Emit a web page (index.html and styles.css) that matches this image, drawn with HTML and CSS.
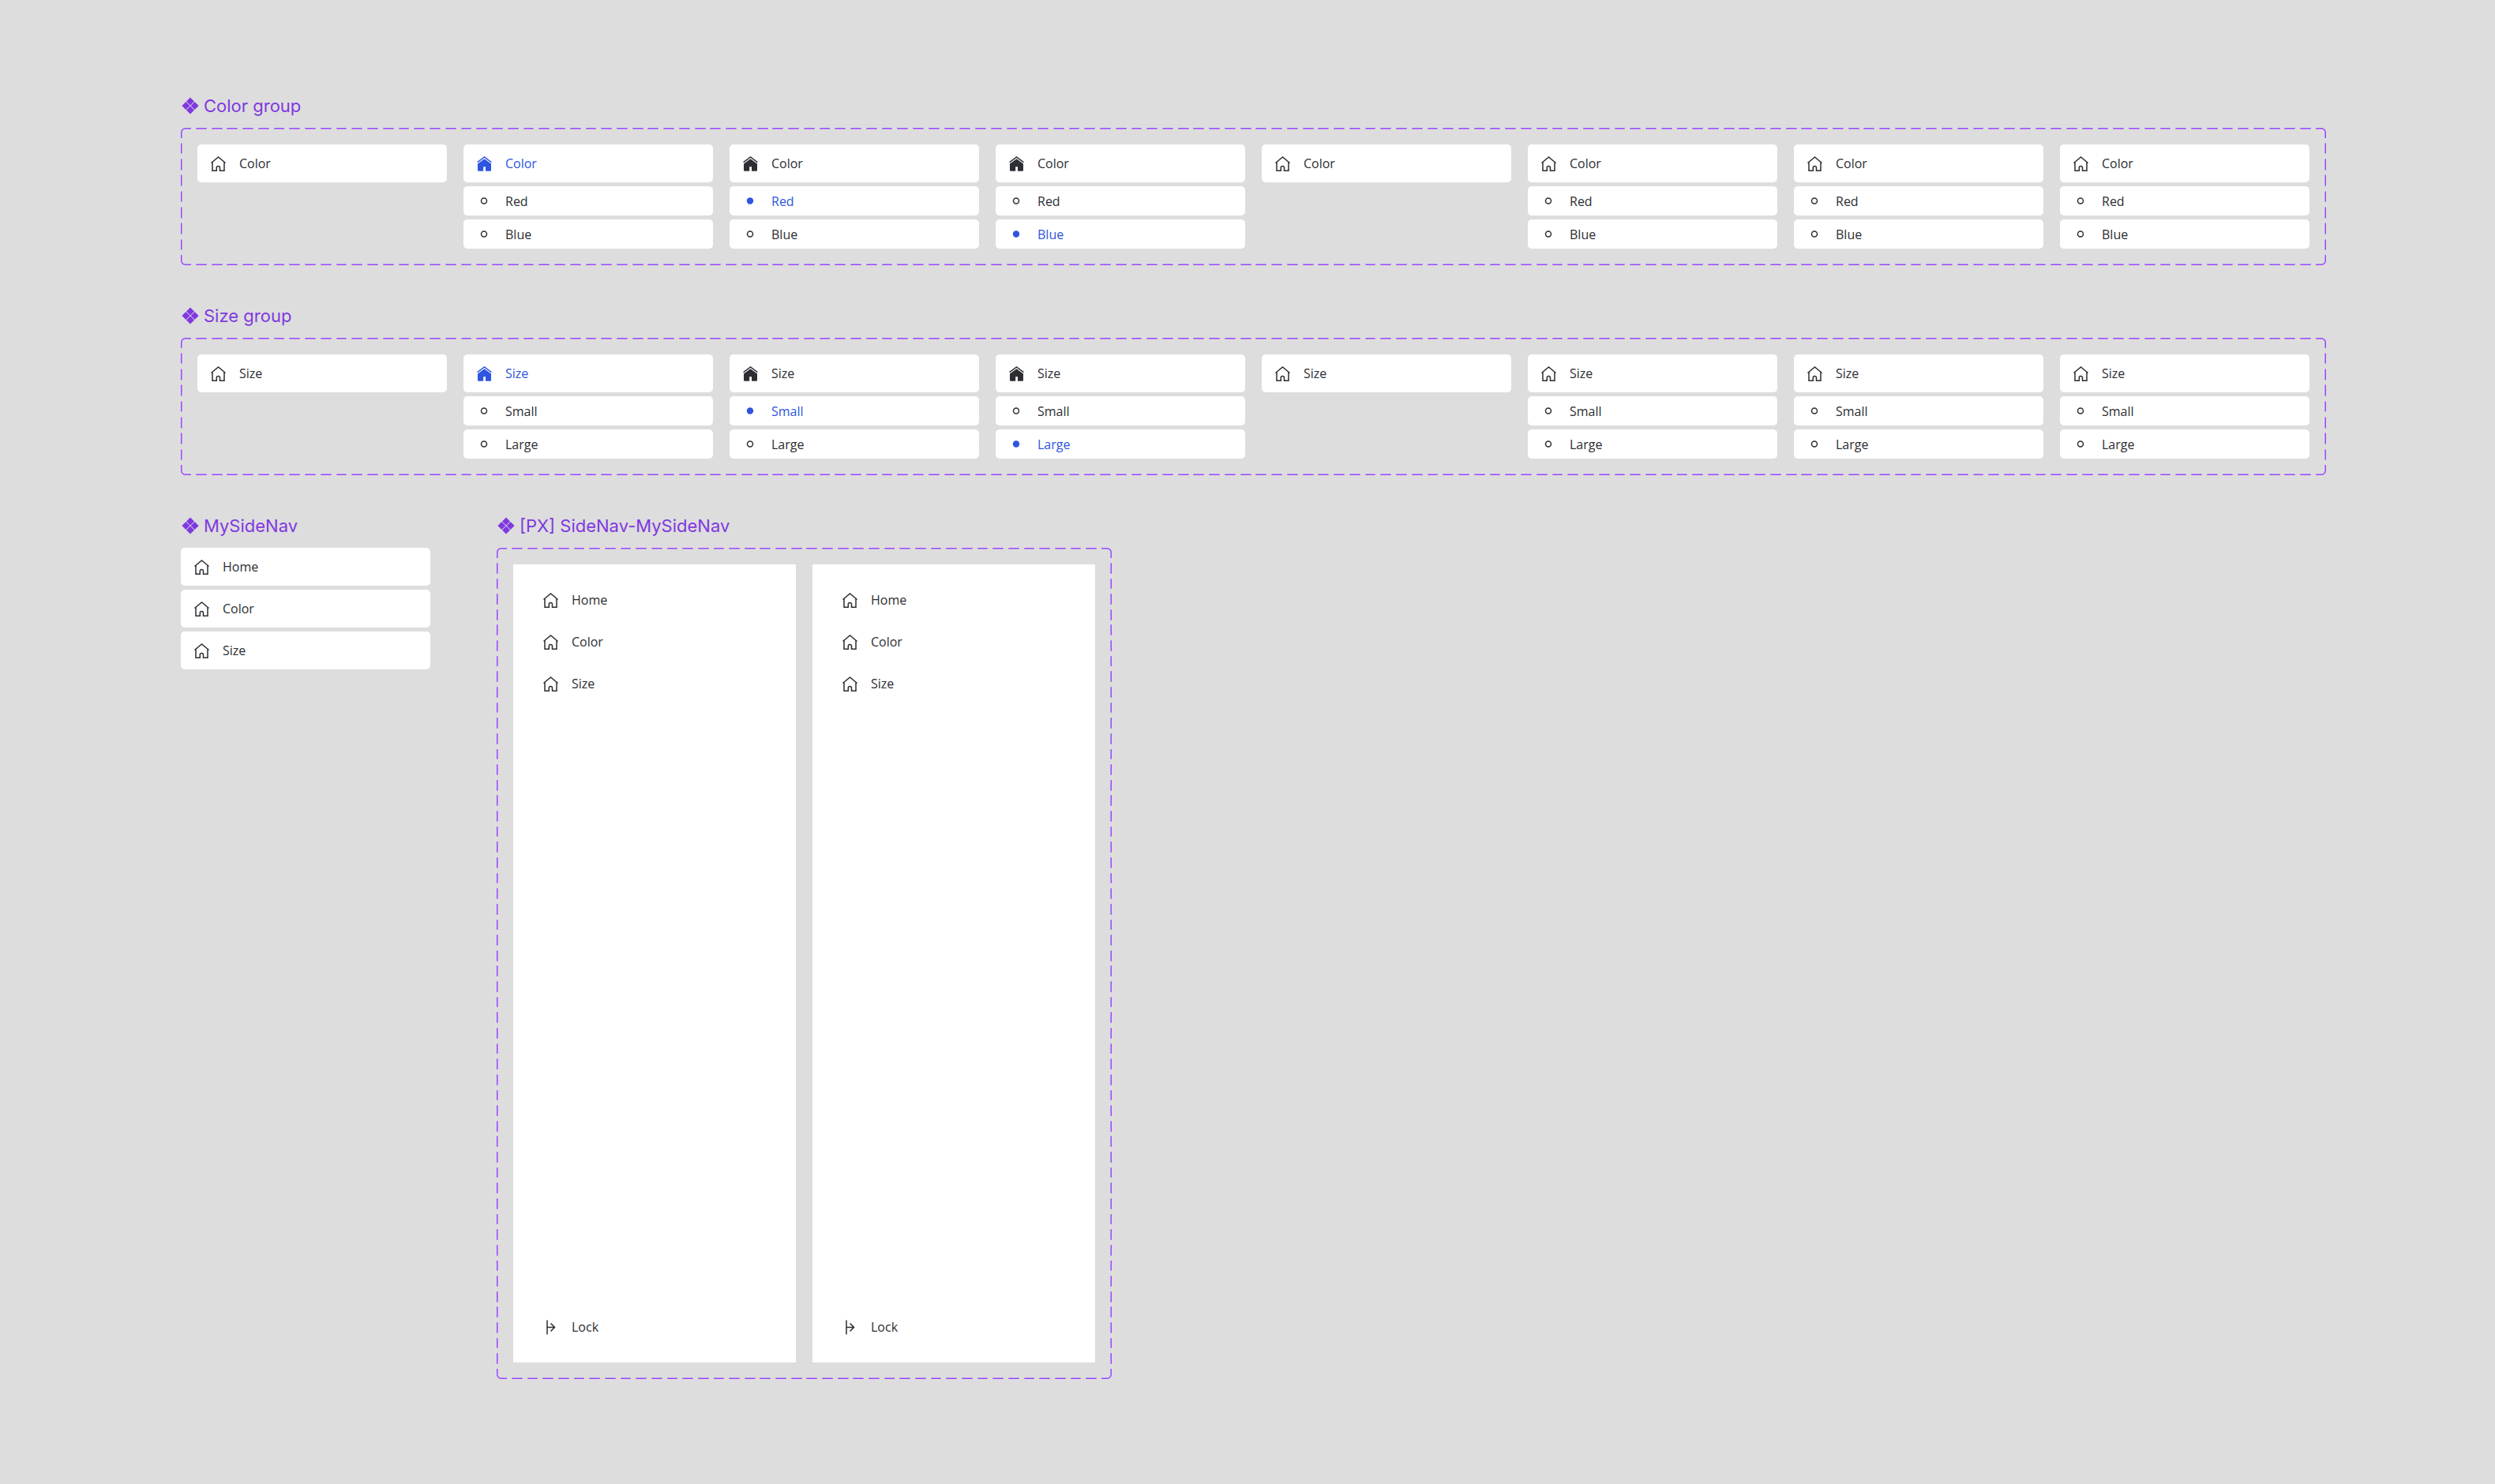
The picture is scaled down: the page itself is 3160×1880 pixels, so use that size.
FILE: index.html
```html
<!DOCTYPE html>
<html lang="en">
<head>
<meta charset="utf-8">
<title>SideNav components</title>
<link rel="stylesheet" href="styles.css">
</head>
<body>
<svg class="sprite" aria-hidden="true">
  <symbol id="component" viewBox="0 0 22 22"><path d="M11 .4 16 5.4 11 10.4 6 5.400ZM11 11.600 16 16.600 11 21.600 6 16.600ZM5.400 6 10.400 11 5.400 16 .4 11ZM16.600 6 21.600 11 16.600 16 11.600 11Z"/></symbol>
  <symbol id="home" viewBox="0 0 19 19"><path d="M.5 8.500 9.500 1 18.500 8.500M2 7.500V18.200H7.300V14.500C7.300 11.800 11.500 11.800 11.500 14.500V18.200H17V7.500" fill="none" stroke="currentColor" stroke-width="1.500"/></symbol>
  <symbol id="home-filled" viewBox="0 0 19 19"><path d="M.6 7.600 9.500 .9 18.400 7.600" fill="none" stroke="currentColor" stroke-width="1.400"/><path d="M9.500 3.200 18 9.500V17.500Q18 18.700 17 18.700H11V13.200H8.200V18.700H2Q1 18.700 1 17.500V9.500Z"/></symbol>
  <symbol id="ring" viewBox="0 0 19 19"><circle cx="9" cy="9.500" r="3.500" fill="none" stroke="currentColor" stroke-width="1.500"/></symbol>
  <symbol id="dot" viewBox="0 0 19 19"><circle cx="9" cy="9.500" r="4.200"/></symbol>
  <symbol id="lock" viewBox="0 0 19 19"><path d="M5 .5V18.500M5 9.500H14.500M9.500 4.500 14.500 9.500 9.500 14.500" fill="none" stroke="currentColor" stroke-width="1.500"/></symbol>
</svg>
<main class="canvas">
  <section class="set">
    <h2 class="title"><svg class="mark"><use href="#component"/></svg>Color group</h2>
    <div class="frame variants">
      <nav class="group"><a class="item" href="#"><svg class="icon"><use href="#home"/></svg>Color</a></nav>
      <nav class="group"><a class="item active" href="#"><svg class="icon"><use href="#home-filled"/></svg>Color</a><a class="item sub" href="#"><svg class="icon"><use href="#ring"/></svg>Red</a><a class="item sub" href="#"><svg class="icon"><use href="#ring"/></svg>Blue</a></nav>
      <nav class="group"><a class="item" href="#"><svg class="icon"><use href="#home-filled"/></svg>Color</a><a class="item sub active" href="#"><svg class="icon"><use href="#dot"/></svg>Red</a><a class="item sub" href="#"><svg class="icon"><use href="#ring"/></svg>Blue</a></nav>
      <nav class="group"><a class="item" href="#"><svg class="icon"><use href="#home-filled"/></svg>Color</a><a class="item sub" href="#"><svg class="icon"><use href="#ring"/></svg>Red</a><a class="item sub active" href="#"><svg class="icon"><use href="#dot"/></svg>Blue</a></nav>
      <nav class="group"><a class="item" href="#"><svg class="icon"><use href="#home"/></svg>Color</a></nav>
      <nav class="group"><a class="item" href="#"><svg class="icon"><use href="#home"/></svg>Color</a><a class="item sub" href="#"><svg class="icon"><use href="#ring"/></svg>Red</a><a class="item sub" href="#"><svg class="icon"><use href="#ring"/></svg>Blue</a></nav>
      <nav class="group"><a class="item" href="#"><svg class="icon"><use href="#home"/></svg>Color</a><a class="item sub" href="#"><svg class="icon"><use href="#ring"/></svg>Red</a><a class="item sub" href="#"><svg class="icon"><use href="#ring"/></svg>Blue</a></nav>
      <nav class="group"><a class="item" href="#"><svg class="icon"><use href="#home"/></svg>Color</a><a class="item sub" href="#"><svg class="icon"><use href="#ring"/></svg>Red</a><a class="item sub" href="#"><svg class="icon"><use href="#ring"/></svg>Blue</a></nav>
    </div>
  </section>
  <section class="set">
    <h2 class="title"><svg class="mark"><use href="#component"/></svg>Size group</h2>
    <div class="frame variants">
      <nav class="group"><a class="item" href="#"><svg class="icon"><use href="#home"/></svg>Size</a></nav>
      <nav class="group"><a class="item active" href="#"><svg class="icon"><use href="#home-filled"/></svg>Size</a><a class="item sub" href="#"><svg class="icon"><use href="#ring"/></svg>Small</a><a class="item sub" href="#"><svg class="icon"><use href="#ring"/></svg>Large</a></nav>
      <nav class="group"><a class="item" href="#"><svg class="icon"><use href="#home-filled"/></svg>Size</a><a class="item sub active" href="#"><svg class="icon"><use href="#dot"/></svg>Small</a><a class="item sub" href="#"><svg class="icon"><use href="#ring"/></svg>Large</a></nav>
      <nav class="group"><a class="item" href="#"><svg class="icon"><use href="#home-filled"/></svg>Size</a><a class="item sub" href="#"><svg class="icon"><use href="#ring"/></svg>Small</a><a class="item sub active" href="#"><svg class="icon"><use href="#dot"/></svg>Large</a></nav>
      <nav class="group"><a class="item" href="#"><svg class="icon"><use href="#home"/></svg>Size</a></nav>
      <nav class="group"><a class="item" href="#"><svg class="icon"><use href="#home"/></svg>Size</a><a class="item sub" href="#"><svg class="icon"><use href="#ring"/></svg>Small</a><a class="item sub" href="#"><svg class="icon"><use href="#ring"/></svg>Large</a></nav>
      <nav class="group"><a class="item" href="#"><svg class="icon"><use href="#home"/></svg>Size</a><a class="item sub" href="#"><svg class="icon"><use href="#ring"/></svg>Small</a><a class="item sub" href="#"><svg class="icon"><use href="#ring"/></svg>Large</a></nav>
      <nav class="group"><a class="item" href="#"><svg class="icon"><use href="#home"/></svg>Size</a><a class="item sub" href="#"><svg class="icon"><use href="#ring"/></svg>Small</a><a class="item sub" href="#"><svg class="icon"><use href="#ring"/></svg>Large</a></nav>
    </div>
  </section>
  <div class="row">
    <section class="set nav-set">
      <h2 class="title"><svg class="mark"><use href="#component"/></svg>MySideNav</h2>
      <nav class="group"><a class="item" href="#"><svg class="icon"><use href="#home"/></svg>Home</a><a class="item" href="#"><svg class="icon"><use href="#home"/></svg>Color</a><a class="item" href="#"><svg class="icon"><use href="#home"/></svg>Size</a></nav>
    </section>
    <section class="set">
      <h2 class="title"><svg class="mark"><use href="#component"/></svg>[PX] SideNav-MySideNav</h2>
      <div class="frame panels">
        <aside class="panel">
          <nav class="group"><a class="item" href="#"><svg class="icon"><use href="#home"/></svg>Home</a><a class="item" href="#"><svg class="icon"><use href="#home"/></svg>Color</a><a class="item" href="#"><svg class="icon"><use href="#home"/></svg>Size</a></nav>
          <button class="item" type="button"><svg class="icon"><use href="#lock"/></svg>Lock</button>
        </aside>
        <aside class="panel">
          <nav class="group"><a class="item" href="#"><svg class="icon"><use href="#home"/></svg>Home</a><a class="item" href="#"><svg class="icon"><use href="#home"/></svg>Color</a><a class="item" href="#"><svg class="icon"><use href="#home"/></svg>Size</a></nav>
          <button class="item" type="button"><svg class="icon"><use href="#lock"/></svg>Lock</button>
        </aside>
      </div>
    </section>
  </div>
</main>
</body>
</html>
```
FILE: styles.css
```css
* { box-sizing: border-box; }

body {
  margin: 0;
  background: #ddd;
  color: #2d2e33;
  font: 16px/24px "Open Sans", "Noto Sans", sans-serif;
}

.sprite { display: none; }

.canvas {
  display: flex;
  flex-direction: column;
  gap: 52px;
  padding: 122px 214px 120px 229px;
}

.row {
  display: flex;
  align-items: flex-start;
  gap: 84px;
}

.title {
  display: flex;
  align-items: center;
  gap: 6px;
  margin: 0 0 16px;
  padding-left: 1px;
  color: #8038e0;
  font: 400 22px/24px Inter, sans-serif;
}

.mark {
  width: 22px;
  height: 22px;
  fill: currentColor;
}

/* Dashed outline: rounded corners with one dash repeated along each edge */
.frame {
  padding: 5px;
  border: 16px solid transparent;
  border-image: url("data:image/svg+xml,%3Csvg xmlns='http://www.w3.org/2000/svg' width='207' height='207' fill='none' stroke='%239747ff' stroke-width='6'%3E%3Cpath d='M3 52V23a20 20 0 0 1 20-20H52M155 3H184a20 20 0 0 1 20 20V52M204 155V184a20 20 0 0 1-20 20H155M52 204H23a20 20 0 0 1-20-20V155M77 3h53M77 204h53M3 77v53M204 77v53'/%3E%3C/svg%3E") 64 / 16px round;
}

.variants {
  display: grid;
  grid-template-columns: repeat(8, 1fr);
  gap: 21px;
}

.group {
  display: flex;
  flex-direction: column;
  gap: 5px;
}

.item {
  display: flex;
  align-items: center;
  gap: 17px;
  min-height: 48px;
  padding: 0 17px;
  border: 0;
  border-radius: 5px;
  background: #fff;
  color: inherit;
  font: inherit;
  text-decoration: none;
}

.sub { min-height: 37px; }

.active { color: #2e54e0; }

.icon {
  width: 19px;
  height: 19px;
  fill: currentColor;
}

.nav-set { width: 316px; }

.panels {
  display: flex;
  gap: 21px;
}

.panel {
  display: flex;
  flex-direction: column;
  justify-content: space-between;
  width: 358px;
  min-height: 1011px;
  padding: 21px;
  background: #fff;
}
```
